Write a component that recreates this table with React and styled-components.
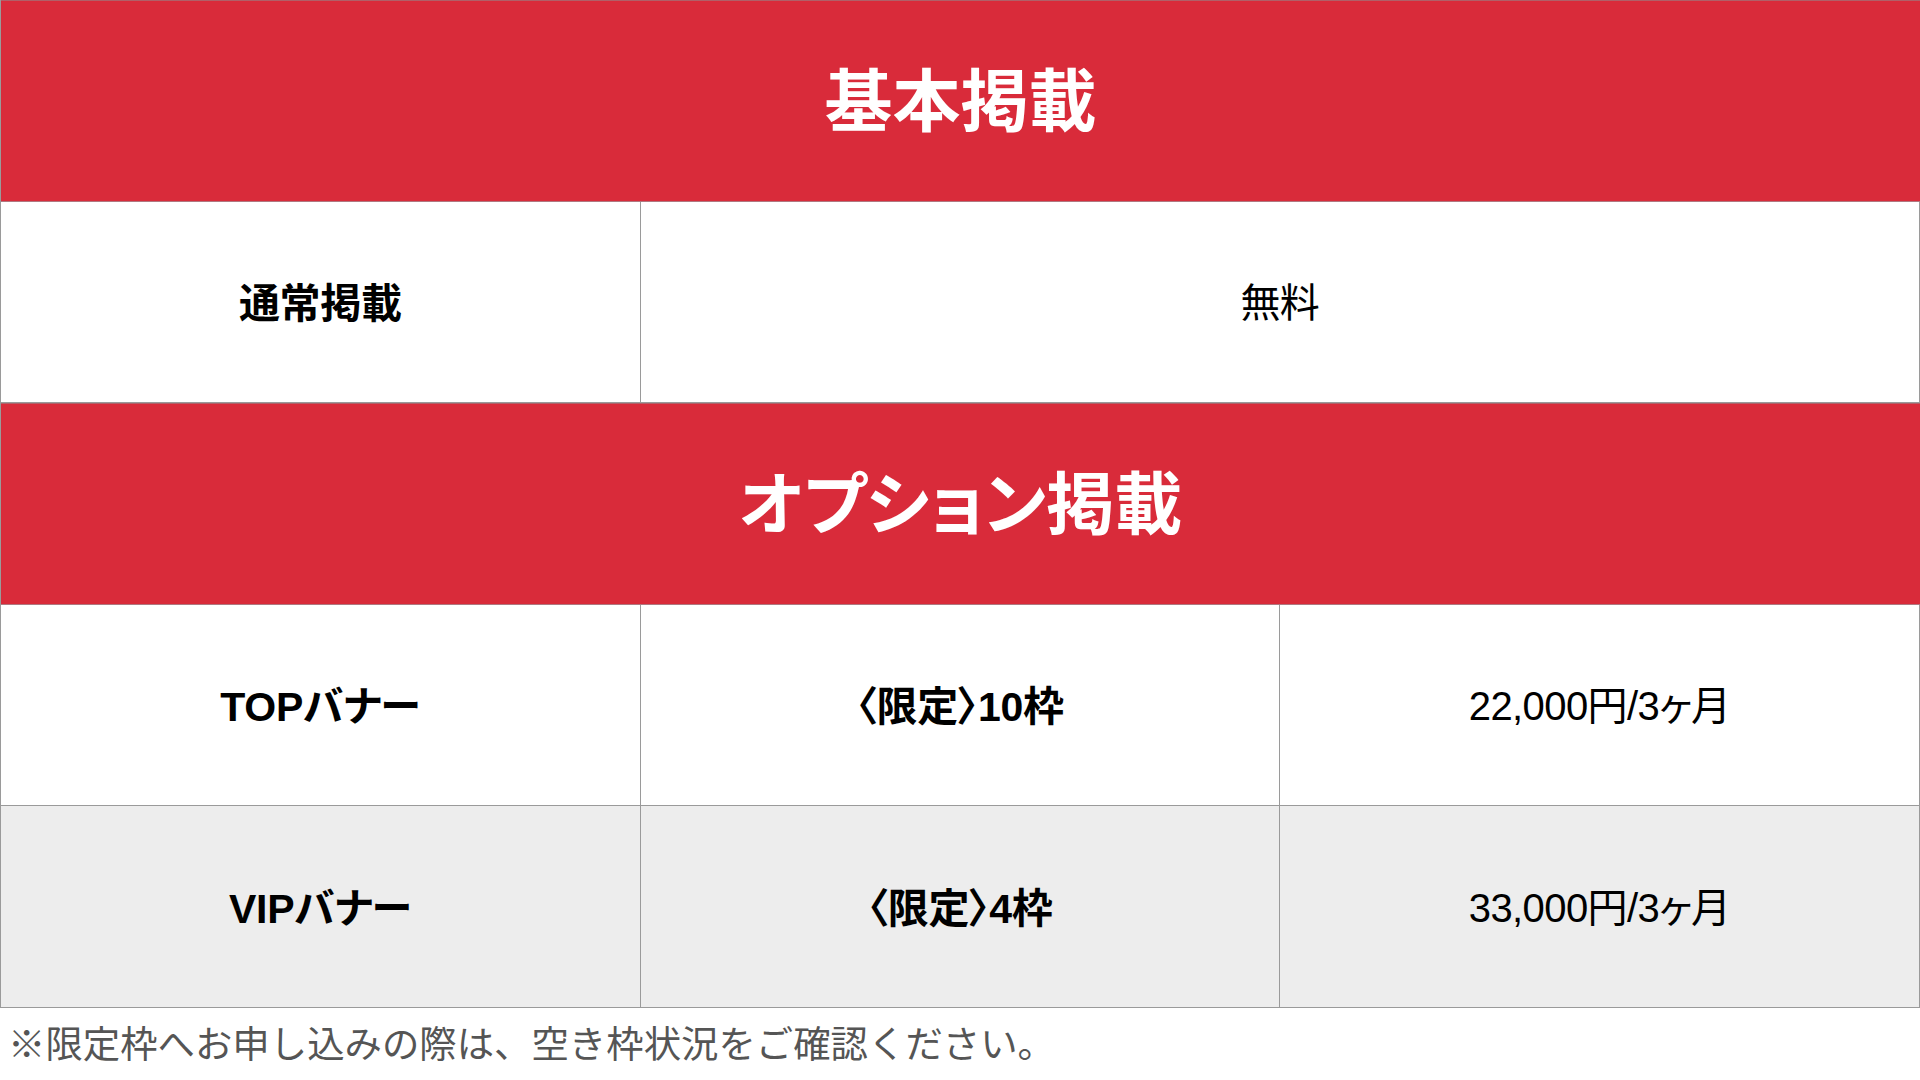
import styled, { createGlobalStyle } from "styled-components";

const GlobalStyle = createGlobalStyle`
    html, body {
        margin: 0;
        padding: 0;
        background: #ffffff;
    }
    body {
        font-family: "Liberation Sans", "Noto Sans CJK JP", sans-serif;
        color: #000;
    }
`

const Page = styled.div`
    width: 1920px;
    height: 1080px;
    display: flex;
    flex-direction: column;
    overflow: hidden;
`

const Table = styled.div`
    display: grid;
    grid-template-columns: repeat(3, 1fr);
    grid-auto-rows: 201.6px;
    border-left: 1px solid #9a9a9a;
`

const Banner = styled.div`
    grid-column: 1 / -1;
    background: #d92b3a;
    border-top: 1px solid #b06068;
    border-bottom: 1px solid #b07880;
    color: #fff;
    font-family: "Noto Sans CJK JP", sans-serif;
    font-weight: 700;
    font-size: 68px;
    font-feature-settings: "palt";
    display: flex;
    align-items: center;
    justify-content: center;
    padding-bottom: 8px;
`

const Cell = styled.div`
    grid-column: span ${p => p.$span || 1};
    background: ${p => p.$grey ? "#ededed" : "#ffffff"};
    border-right: 1px solid #9a9a9a;
    border-bottom: 1px solid #9a9a9a;
    display: flex;
    align-items: center;
    justify-content: center;
    font-size: ${p => p.$bold ? "41px" : "40px"};
    font-weight: ${p => p.$bold ? 700 : 400};
    font-feature-settings: "palt";
    letter-spacing: ${p => p.$bold ? "-0.3px" : "-0.6px"};
    padding-bottom: 4px;
`

const Note = styled.p`
    margin: 0;
    padding: 8px 0 0 8px;
    font-family: "Noto Sans CJK JP", sans-serif;
    font-size: 37.4px;
    color: #555555;
    line-height: 1.4;
`

const rows = [
    { name: "TOPバナー", limit: "〈限定〉10枠", price: "22,000円/3ヶ月" },
    { name: "VIPバナー", limit: "〈限定〉4枠", price: "33,000円/3ヶ月" },
]

const App = () => {
  return (
    <Page>
        <GlobalStyle />
        <Table>
            <Banner>基本掲載</Banner>
            <Cell $bold>通常掲載</Cell>
            <Cell $span={2}>無料</Cell>
            <Banner>オプション掲載</Banner>
            {
                rows.map((r, ind) => [
                    <Cell key={`n${ind}`} $bold $grey={ind % 2 === 1}>{r.name}</Cell>,
                    <Cell key={`l${ind}`} $bold $grey={ind % 2 === 1}>{r.limit}</Cell>,
                    <Cell key={`p${ind}`} $grey={ind % 2 === 1}>{r.price}</Cell>,
                ])
            }
        </Table>
        <Note>※限定枠へお申し込みの際は、空き枠状況をご確認ください。</Note>
    </Page>
  )
}

export default App
